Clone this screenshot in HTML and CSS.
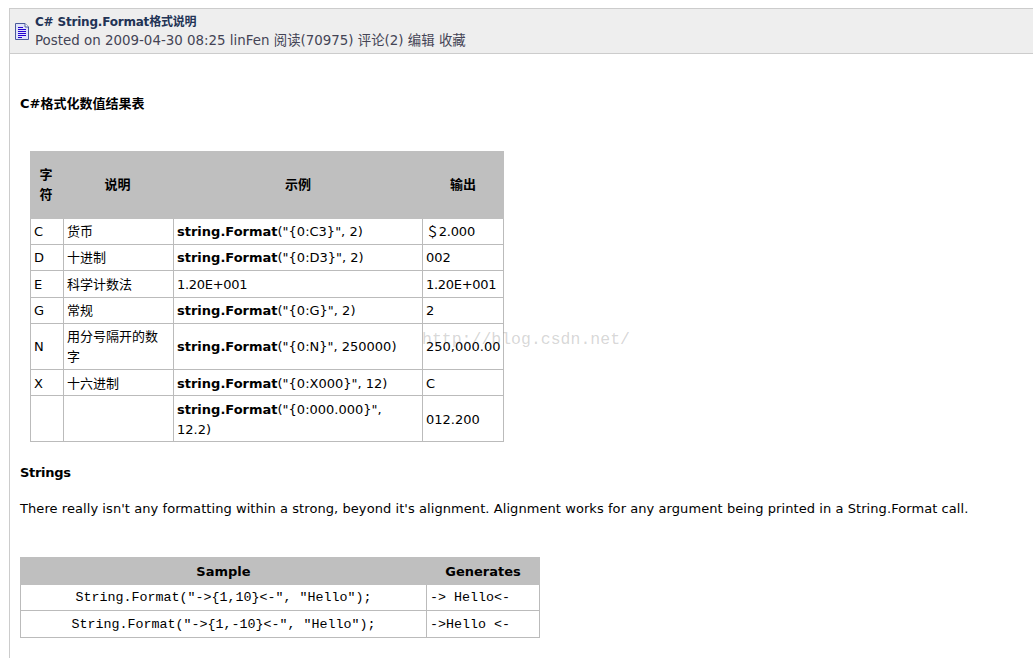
FILE: index.html
```html
<!DOCTYPE html>
<html lang="zh">
<head>
<meta charset="utf-8">
<title>C# String.Format格式说明</title>
<link rel="stylesheet" href="styles.css">
</head>
<body>
<div class="post">
  <header class="post-head">
    <svg class="doc-icon" width="14" height="17" viewBox="0 0 14 17">
      <path d="M.5.5H10L13.5 4V16.5H.5Z" fill="#dfe3fa" stroke="#4a5a9a"/>
      <path d="M10 .5V4H13.5" fill="#fff" stroke="#4a5a9a"/>
      <path d="M3 4.5H8M3 6.5H11M3 8.5H11M3 10.5H11M3 12.5H11M3 14.5H7" stroke="#2200d0" fill="none"/>
    </svg>
    <div class="head-text">
      <div class="post-title">C# String.Format格式说明</div>
      <div class="post-meta">Posted on 2009-04-30 08:25 linFen 阅读(70975) 评论(2) 编辑 收藏</div>
    </div>
  </header>
  <main class="post-body">
    <h3 class="heading first">C#格式化数值结果表</h3>
    <table class="grid numeric">
      <colgroup><col class="c1"><col class="c2"><col class="c3"><col class="c4"></colgroup>
      <thead>
        <tr class="tall"><th class="narrow">字符</th><th class="shift">说明</th><th>示例</th><th>输出</th></tr>
      </thead>
      <tbody>
        <tr><td>C</td><td>货币</td><td><b>string.Format</b>("{0:C3}", 2)</td><td class="money">＄2.000</td></tr>
        <tr><td>D</td><td>十进制</td><td><b>string.Format</b>("{0:D3}", 2)</td><td>002</td></tr>
        <tr class="row-e"><td>E</td><td>科学计数法</td><td class="sci">1.20E+001</td><td class="sci">1.20E+001</td></tr>
        <tr><td>G</td><td>常规</td><td><b>string.Format</b>("{0:G}", 2)</td><td>2</td></tr>
        <tr><td>N</td><td>用分号隔开的数字</td><td><b>string.Format</b>("{0:N}", 250000)</td><td>250,000.00</td></tr>
        <tr class="low"><td>X</td><td>十六进制</td><td><b>string.Format</b>("{0:X000}", 12)</td><td>C</td></tr>
        <tr class="low"><td></td><td></td><td><b>string.Format</b>("{0:000.000}", 12.2)</td><td>012.200</td></tr>
      </tbody>
    </table>
    <h3 class="heading strings">Strings</h3>
    <p class="para">There really isn't any formatting within a strong, beyond it's alignment. Alignment works for any argument being printed in a String.Format call.</p>
    <table class="grid sample">
      <colgroup><col class="s1"><col class="s2"></colgroup>
      <thead><tr><th>Sample</th><th>Generates</th></tr></thead>
      <tbody>
        <tr><td class="code center">String.Format("-&gt;{1,10}&lt;-", "Hello");</td><td class="code">-&gt; Hello&lt;-</td></tr>
        <tr class="row-e"><td class="code center">String.Format("-&gt;{1,-10}&lt;-", "Hello");</td><td class="code">-&gt;Hello <span class="gap">&lt;-</span></td></tr>
      </tbody>
    </table>
  </main>
</div>
<div class="watermark">http://blog.csdn.net/</div>
</body>
</html>
```

FILE: styles.css
```css
html, body {
  margin: 0;
  padding: 0;
  background: #fff;
}
body {
  height: 658px;
  overflow: hidden;
  position: relative;
  box-sizing: border-box;
  padding: 8px 0 0 9px;
  font-family: "DejaVu Sans", "Noto Sans CJK SC", sans-serif;
  font-size: 13px;
  color: #000;
}
.post {
  border-left: 1px solid #ccc;
  height: 650px;
}
.post-head {
  display: flex;
  align-items: center;
  gap: 6px;
  height: 44px;
  padding-left: 5px;
  background: #eee;
  border-top: 1px solid #ccc;
  border-bottom: 1px solid #ccc;
}
.doc-icon {
  flex: none;
  margin-top: 1px;
}
.head-text {
  padding-top: 2px;
}
.post-title {
  font-size: 12px;
  font-weight: bold;
  letter-spacing: -0.2px;
  line-height: 18px;
  color: #223355;
}
.post-meta {
  font-size: 13.4px;
  line-height: 20px;
  color: #445;
}
.post-body {
  padding: 0 0 0 10px;
}
.heading {
  margin: 0;
  font-size: 13px;
  font-weight: bold;
  line-height: 20px;
}
.heading.first {
  padding-top: 40px;
}
.grid {
  border-collapse: collapse;
  table-layout: fixed;
  background: #fff;
}
.grid th, .grid td {
  border: 1px solid #bbb;
  padding: 3px 3px 2px;
  line-height: 20px;
  font-size: 13px;
}
.grid th {
  background: #bfbfbf;
  text-align: center;
}
.numeric {
  margin: 37px 0 0 10px;
  width: 474px;
}
.c1 { width: 33px; }
.c2 { width: 110px; }
.c3 { width: 249px; }
.c4 { width: 81px; }
.grid .tall th {
  height: 61px;
  padding: 2px 3px 3px;
  border-color: #bfbfbf;
}
.grid .tall th.shift {
  padding: 2px 4px 3px 2px;
}
.grid .tall th.narrow {
  padding: 2px 7px 3px 5px;
}
.row-e td {
  height: 21px;
}
.grid .low td {
  padding-top: 4px;
  padding-bottom: 1px;
}
.sci {
  letter-spacing: -0.3px;
}
.money {
  letter-spacing: -0.2px;
}
.strings {
  margin-top: 21px;
  letter-spacing: -0.3px;
}
.para {
  margin: 16px 0 0;
  line-height: 20px;
  letter-spacing: 0.07px;
}
.sample {
  margin-top: 38px;
  width: 519px;
}
.s1 { width: 406px; }
.s2 { width: 113px; }
.sample th {
  border-color: #bfbfbf;
  height: 21px;
}
.code {
  font-family: "Liberation Mono", monospace;
  font-size: 13.33px;
}
.grid td.code {
  font-size: 13.33px;
}
.center {
  text-align: center;
}
.gap {
  margin-left: 0;
}
.watermark {
  position: absolute;
  left: 422px;
  top: 329px;
  font-family: "Liberation Mono", monospace;
  font-size: 16.5px;
  line-height: 22px;
  color: rgba(120, 120, 120, 0.3);
  white-space: nowrap;
  pointer-events: none;
}
```
